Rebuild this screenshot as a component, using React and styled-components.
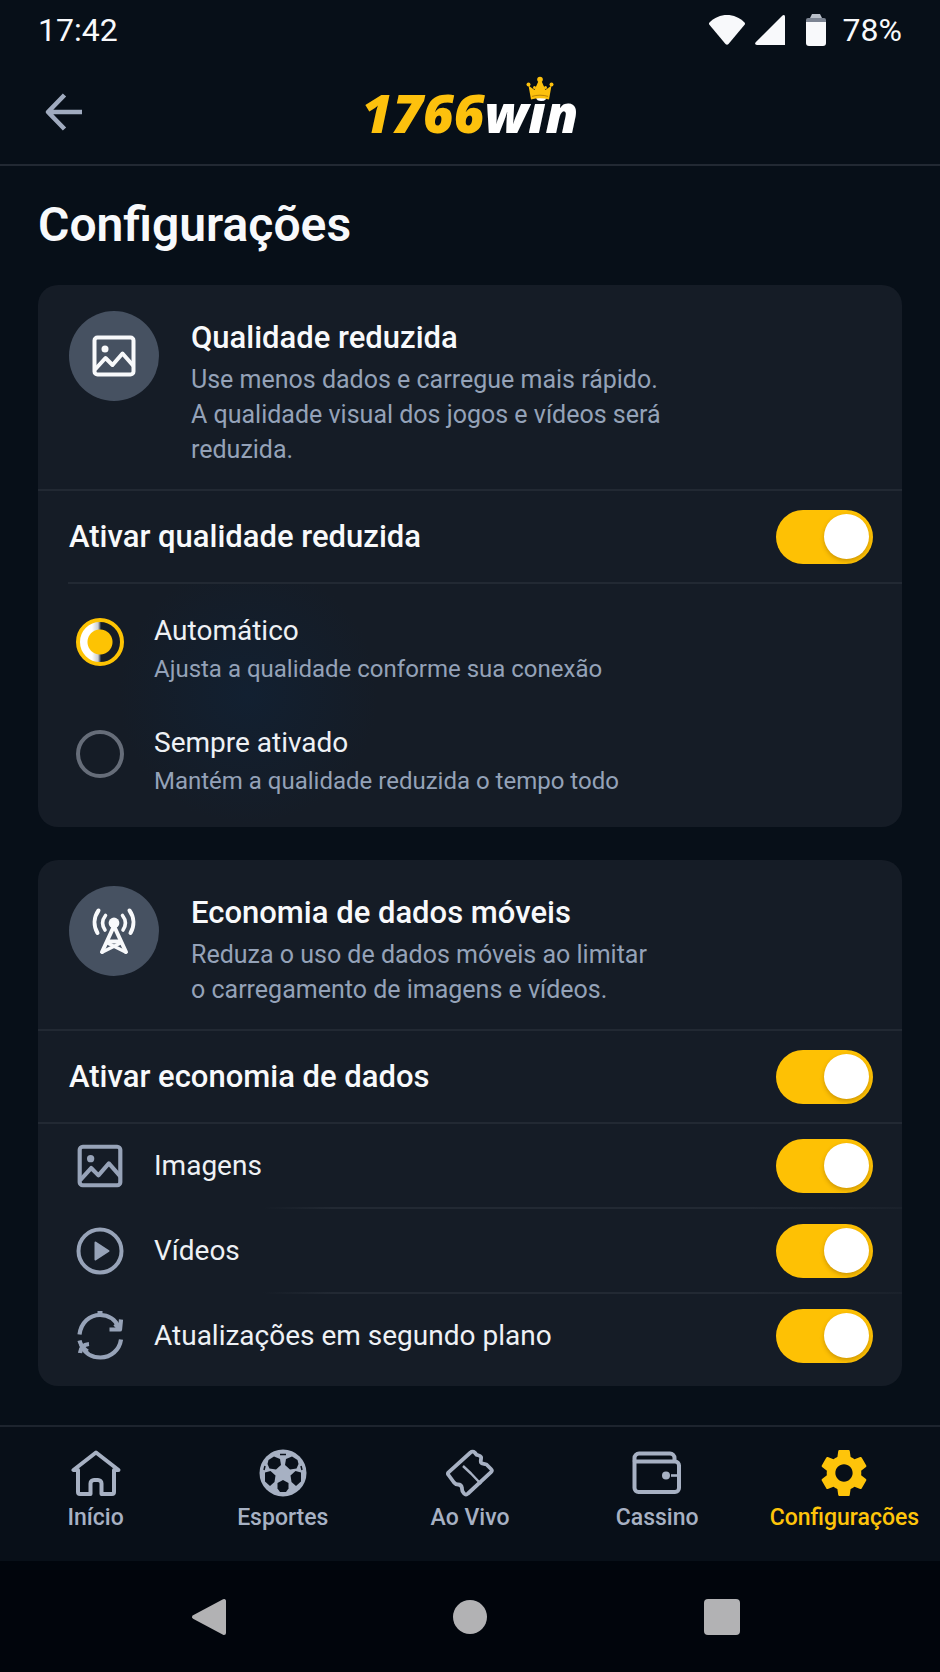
import { useState } from 'react';
import styled, { createGlobalStyle } from 'styled-components';
import { MdSettings } from 'react-icons/md';

const App = () => {
  const [reduced, setReduced] = useState(true);
  const [mode, setMode] = useState('auto');
  const [saver, setSaver] = useState({
    all: true,
    images: true,
    videos: true,
    background: true,
  });

  const toggleSaver = (key) => setSaver({ ...saver, [key]: !saver[key] });

  return (
    <Page>
      <GlobalStyle />
      <StatusBar>
        <span>17:42</span>
        <StatusIcons>
          <WifiIcon />
          <SignalIcon />
          <BatteryIcon />
          <span>78%</span>
        </StatusIcons>
      </StatusBar>
      <Header>
        <BackButton type="button" aria-label="Voltar">
          <ArrowIcon />
        </BackButton>
        <Logo href="#inicio">
          1766<LogoWin>win</LogoWin>
          <CrownIcon />
        </Logo>
      </Header>
      <Main>
        <PageTitle>Configurações</PageTitle>
        <Card>
          <CardHead>
            <Badge>
              <ImageIcon size={48} />
            </Badge>
            <HeadText>
              <CardTitle>Qualidade reduzida</CardTitle>
              <Description>
                Use menos dados e carregue mais rápido.
                <br />A qualidade visual dos jogos e vídeos será
                <br />
                reduzida.
              </Description>
            </HeadText>
          </CardHead>
          <Divider />
          <SwitchRow>
            <RowTitle>Ativar qualidade reduzida</RowTitle>
            <Switch
              type="checkbox"
              role="switch"
              checked={reduced}
              onChange={() => setReduced(!reduced)}
            />
          </SwitchRow>
          <Divider $inset />
          <OptionList>
            <Option>
              <Radio
                type="radio"
                name="mode"
                checked={mode === 'auto'}
                onChange={() => setMode('auto')}
              />
              <span>
                <OptionTitle>Automático</OptionTitle>
                <OptionHint>Ajusta a qualidade conforme sua conexão</OptionHint>
              </span>
            </Option>
            <Option>
              <Radio
                type="radio"
                name="mode"
                checked={mode === 'always'}
                onChange={() => setMode('always')}
              />
              <span>
                <OptionTitle>Sempre ativado</OptionTitle>
                <OptionHint>Mantém a qualidade reduzida o tempo todo</OptionHint>
              </span>
            </Option>
          </OptionList>
        </Card>
        <Card $list>
          <CardHead>
            <Badge>
              <TowerIcon />
            </Badge>
            <HeadText>
              <CardTitle>Economia de dados móveis</CardTitle>
              <Description>
                Reduza o uso de dados móveis ao limitar
                <br />o carregamento de imagens e vídeos.
              </Description>
            </HeadText>
          </CardHead>
          <Divider />
          <SwitchRow>
            <RowTitle>Ativar economia de dados</RowTitle>
            <Switch
              type="checkbox"
              role="switch"
              checked={saver.all}
              onChange={() => toggleSaver('all')}
            />
          </SwitchRow>
          <Divider />
          <SwitchRow $sub>
            <ImageIcon size={50} />
            <RowLabel>Imagens</RowLabel>
            <Switch
              type="checkbox"
              role="switch"
              checked={saver.images}
              onChange={() => toggleSaver('images')}
            />
          </SwitchRow>
          <Divider $fade />
          <SwitchRow $sub>
            <PlayIcon />
            <RowLabel>Vídeos</RowLabel>
            <Switch
              type="checkbox"
              role="switch"
              checked={saver.videos}
              onChange={() => toggleSaver('videos')}
            />
          </SwitchRow>
          <Divider $fade />
          <SwitchRow $sub>
            <RefreshIcon />
            <RowLabel>Atualizações em segundo plano</RowLabel>
            <Switch
              type="checkbox"
              role="switch"
              checked={saver.background}
              onChange={() => toggleSaver('background')}
            />
          </SwitchRow>
        </Card>
      </Main>
      <TabBar>
        <Tab href="#inicio">
          <HomeIcon />
          Início
        </Tab>
        <Tab href="#esportes">
          <BallIcon />
          Esportes
        </Tab>
        <Tab href="#ao-vivo">
          <TicketIcon />
          Ao Vivo
        </Tab>
        <Tab href="#cassino">
          <WalletIcon />
          Cassino
        </Tab>
        <Tab href="#configuracoes" $active aria-current="page">
          <MdSettings size={48} viewBox="2 2 20 20" />
          Configurações
        </Tab>
      </TabBar>
      <SystemBar>
        <SystemButton type="button" aria-label="Voltar">
          <svg width="56" height="40" viewBox="0 0 56 40">
            <path
              d="M10 20 40 4v32Z"
              fill="currentColor"
              stroke="currentColor"
              strokeWidth="4"
              strokeLinejoin="round"
            />
          </svg>
        </SystemButton>
        <SystemButton type="button" aria-label="Tela inicial">
          <svg width="56" height="40" viewBox="0 0 56 40">
            <circle cx="28" cy="20" r="17" fill="currentColor" />
          </svg>
        </SystemButton>
        <SystemButton type="button" aria-label="Recentes">
          <svg width="56" height="40" viewBox="0 0 56 40">
            <rect x="4" y="2" width="36" height="36" rx="4" fill="currentColor" />
          </svg>
        </SystemButton>
      </SystemBar>
    </Page>
  );
};

const WifiIcon = () => (
  <svg width="38" height="32" viewBox="0 0 38 32" fill="currentColor">
    <path d="M1.5 8.5C11-1.5 27-1.5 36.5 8.5c.7.8.7 1.5.1 2.3L20.5 30c-.9 1-2.1 1-3 0L1.4 10.8c-.6-.8-.6-1.5.1-2.3Z" />
  </svg>
);

const SignalIcon = () => (
  <svg width="32" height="32" viewBox="0 0 32 32" fill="currentColor">
    <path d="M28.5 1.5c1-1 2.5-.5 2.5 1V31H3c-1.8 0-2.5-1.5-1.3-2.7Z" />
  </svg>
);

const BatteryIcon = () => (
  <svg width="20" height="32" viewBox="0 0 20 32">
    <path d="M6 0h8l2 4H4Z" fill="#b9bfc9" />
    <path d="M2 4h16a2 2 0 0 1 2 2v2H0V6a2 2 0 0 1 2-2Z" fill="#7c8492" />
    <path d="M0 8h20v21a3 3 0 0 1-3 3H3a3 3 0 0 1-3-3Z" fill="currentColor" />
  </svg>
);

const ArrowIcon = () => (
  <svg width="40" height="40" viewBox="0 0 40 40" fill="none">
    <path
      d="M20.5 3 4 20l16.5 17M4.5 20H38"
      stroke="currentColor"
      strokeWidth="4.6"
      strokeLinejoin="round"
    />
  </svg>
);

const CrownIcon = () => (
  <Crown viewBox="0 0 28 24" fill="#fdc10d" aria-hidden="true">
    <path d="M5 23.5 2.5 9.5 8.5 14l4-9h3l4 9 6-4.5L23 23.5c-6-1.7-12-1.7-18 0Z" />
    <circle cx="14" cy="3.5" r="2.8" />
    <circle cx="2.5" cy="8.5" r="2" />
    <circle cx="25.5" cy="8.5" r="2" />
    <circle cx="8.5" cy="11.5" r="1.5" />
    <circle cx="19.5" cy="11.5" r="1.5" />
    <path d="M6 20.4c5-1.6 11-1.6 16 0" fill="none" stroke="#b98205" />
  </Crown>
);

const ImageIcon = ({ size }) => (
  <svg width={size} height={size} viewBox="0 0 48 48" fill="none" aria-hidden="true">
    <g stroke="currentColor" strokeWidth="4" strokeLinejoin="round">
      <rect x="4.5" y="5.5" width="39" height="37" rx="3" />
      <path d="m5 37.5 10.5-11.5 7 7 10-11.5 11 12.5" />
    </g>
    <circle cx="15" cy="17" r="3.5" fill="currentColor" />
  </svg>
);

const TowerIcon = () => (
  <svg width="48" height="48" viewBox="0 0 48 48" fill="none" aria-hidden="true">
    <g stroke="currentColor" strokeWidth="4" strokeLinecap="round" strokeLinejoin="round">
      <path d="M12 45 24 19l12 26" />
      <path d="M18.5 34.5h11" />
      <path d="m17.5 36 18 9M30.5 36l-18 9" strokeWidth="3.4" />
      <path
        d="M15.5 8.5c-3.5 4.5-3.5 10-.5 14.5M32.5 8.5c3.5 4.5 3.5 10 .5 14.5"
        strokeWidth="3.6"
      />
      <path d="M8.5 3.5c-5 7-5 15.5-1 22.5M39.5 3.5c5 7 5 15.5 1 22.5" />
    </g>
    <circle cx="24" cy="16" r="5.4" fill="currentColor" />
  </svg>
);

const PlayIcon = () => (
  <svg width="50" height="50" viewBox="0 0 50 50" fill="none" aria-hidden="true">
    <circle cx="25" cy="25" r="21.5" stroke="currentColor" strokeWidth="4" />
    <path
      d="M20.5 16.5 33.5 25l-13 8.5Z"
      fill="currentColor"
      stroke="currentColor"
      strokeWidth="2"
      strokeLinejoin="round"
    />
  </svg>
);

const RefreshIcon = () => (
  <svg width="50" height="50" viewBox="0 0 50 50" fill="none" aria-hidden="true">
    <g stroke="currentColor" strokeWidth="4.2" strokeLinejoin="round">
      <path d="M4.5 23.5C6 11.5 14.5 4 25 4c9 0 15.5 5 19 12.5" />
      <path d="M46 8.5 45 18.5H34.5" />
      <path d="m40 13 5 5.5" />
      <path d="M22.5 2h5" />
      <path d="M46 28.5C44.5 39 36 46.5 25.5 46.5 16 46.5 9.5 42 6 33.5" />
      <path d="M4.5 29.5c1 4 4 8 8 11M5 42c.5-5 3.5-8.5 9-9" />
    </g>
  </svg>
);

const HomeIcon = () => (
  <svg width="50" height="48" viewBox="-1 0 50 48" fill="none" aria-hidden="true">
    <path
      d="M1.5 21H6v22a2 2 0 0 0 2 2h10.5V34.5a3.5 3.5 0 0 1 3.5-3.5h4a3.5 3.5 0 0 1 3.5 3.5V45H40a2 2 0 0 0 2-2V21h4.5L24 3.5Z"
      stroke="currentColor"
      strokeWidth="4"
      strokeLinejoin="round"
    />
  </svg>
);

const BallIcon = () => (
  <svg width="48" height="48" viewBox="0 0 48 48" aria-hidden="true">
    <circle cx="24" cy="24" r="23.5" fill="currentColor" />
    <g fill="#0a111b">
      <path d="m9.5 11 5.5-3.5 6 2.5 1 6-5 4.5-6.5-1L8.5 15Z" />
      <path d="M38.5 11 33 7.5 27 10l-1 6 5 4.5 6.5-1L39.5 15Z" />
      <path d="m6 23.5 5.5-1.5 5 4.5-1 6.5-4.5 4L6 32.5Z" />
      <path d="m42 23.5-5.5-1.5-5 4.5 1 6.5 4.5 4L42 32.5Z" />
      <path d="m18.5 34 5.5-3 5.5 3v5.500L27 43h-6l-2.500-3.500Z" />
    </g>
    <path d="M21 5.5h6M5 21l1-4M43 21l-1-4" stroke="#0a111b" strokeWidth="1.5" />
  </svg>
);

const TicketIcon = () => (
  <svg width="48" height="48" viewBox="0 0 48 48" fill="none" aria-hidden="true">
    <g stroke="currentColor" strokeLinejoin="round">
      <path
        d="M2.500 26c-.8-.9-.8-1.8 0-2.700L24.500 3.500c1.200-1.200 3-1.200 4.200 0l1.800 2.200c1.500.8 3.500.6 4.500 2.300.6 1.400-.8 3.600 0 5.500 1 1.800 3.800.8 5.500 2l4.500 4.500c1 1 1 2.200 0 3.200L22 44.500c-1.200 1.200-2.800 1.200-4 0-1.500-1.500-2.300-3-2-5.500-.5-2.500-1.500-3.500-4-3.500-1.800 0-2.800-.5-4-2Z"
        strokeWidth="3.8"
      />
      <path d="m17 17 8 7.5 10 10.5" strokeWidth="2.4" />
    </g>
  </svg>
);

const WalletIcon = () => (
  <svg width="50" height="48" viewBox="0 0 50 48" fill="none" aria-hidden="true">
    <g stroke="currentColor" strokeWidth="4" strokeLinejoin="round">
      <path d="M2.5 12.5V9A4.5 4.5 0 0 1 7 4.500h31A4.5 4.5 0 0 1 42.5 9v3.5" />
      <path d="M2.5 12.5H43a4 4 0 0 1 4 4V39a4 4 0 0 1-4 4H6.5a4 4 0 0 1-4-4Z" />
      <path d="M39 26.5h7" strokeWidth="2.6" />
    </g>
    <circle cx="34" cy="26.5" r="4" fill="currentColor" />
  </svg>
);

const GlobalStyle = createGlobalStyle`
  * {
    box-sizing: border-box;
  }
  body {
    margin: 0;
    background: #070f18;
    color: #f8f9fb;
    font-family: Roboto, 'Liberation Sans', sans-serif;
  }
  svg {
    display: block;
    flex: none;
  }
`;

const Page = styled.div`
  display: flex;
  flex-direction: column;
  min-height: 100vh;
`;

const StatusBar = styled.div`
  display: flex;
  justify-content: space-between;
  align-items: center;
  height: 60px;
  padding: 0 38px;
  font-size: 32px;
`;

const StatusIcons = styled.div`
  display: flex;
  align-items: center;
  gap: 8px;
  svg:nth-child(3) {
    margin: 0 9px 0 12px;
  }
`;

const Header = styled.header`
  display: grid;
  grid-template-columns: 1fr auto 1fr;
  align-items: center;
  height: 106px;
  padding: 0 44px;
  border-bottom: 2px solid #222933;
`;

const BackButton = styled.button`
  justify-self: start;
  padding: 0;
  border: 0;
  background: none;
  color: #a0abbf;
  cursor: pointer;
`;

const Logo = styled.a`
  position: relative;
  padding-top: 2px;
  color: #fdc10d;
  font-family: 'Open Sans', 'Noto Sans', sans-serif;
  font-size: 53px;
  font-style: italic;
  font-weight: 800;
  line-height: 60px;
  text-decoration: none;
`;

const LogoWin = styled.span`
  color: #fff;
`;

const Crown = styled.svg`
  position: absolute;
  top: -5px;
  right: 24px;
  width: 28px;
  height: 24px;
`;

const Main = styled.main`
  flex: 1;
  padding: 31px 38px 39px;
`;

const PageTitle = styled.h1`
  margin: 0 0 32px;
  font-size: 48px;
  font-weight: 600;
  line-height: 56px;
`;

const Card = styled.section`
  padding-bottom: ${({ $list }) => ($list ? '9px' : '0')};
  border-radius: 20px;
  background: #151c26;
  & + & {
    margin-top: 33px;
  }
`;

const CardHead = styled.div`
  display: flex;
  gap: 32px;
  padding: 26px 31px 22px;
`;

const Badge = styled.div`
  display: flex;
  flex: none;
  justify-content: center;
  align-items: center;
  width: 90px;
  height: 90px;
  border-radius: 50%;
  background: #465161;
`;

const HeadText = styled.div`
  padding-top: 7px;
`;

const CardTitle = styled.h2`
  margin: 0 0 4px;
  font-size: 31px;
  font-weight: 500;
  line-height: 40px;
`;

const Description = styled.p`
  margin: 0;
  color: #94a2b8;
  font-size: 25px;
  line-height: 35px;
`;

const Divider = styled.div`
  height: 2px;
  margin-left: ${({ $inset }) => ($inset ? '30px' : '0')};
  background: ${({ $fade }) =>
    $fade
      ? 'linear-gradient(90deg, transparent 26%, #222933 34%, #222933 82%, #1a212b)'
      : '#222933'};
`;

const SwitchRow = styled.label`
  display: flex;
  align-items: center;
  gap: 29px;
  height: ${({ $sub }) => ($sub ? '83px' : '91px')};
  padding: 0 29px 0 ${({ $sub }) => ($sub ? '37px' : '31px')};
  color: #97a3b8;
  cursor: pointer;
`;

const RowTitle = styled.span`
  flex: 1;
  color: #f8f9fb;
  font-size: 31px;
  font-weight: 500;
`;

const RowLabel = styled.span`
  flex: 1;
  color: #eef1f5;
  font-size: 28px;
`;

const Switch = styled.input`
  appearance: none;
  display: flex;
  align-items: center;
  width: 97px;
  height: 54px;
  margin: 0;
  padding: 0 4px;
  border-radius: 27px;
  background: #465161;
  cursor: pointer;
  &::before {
    content: '';
    width: 45px;
    height: 45px;
    border-radius: 50%;
    background: #fff;
    box-shadow: 0 2px 4px rgba(90, 50, 0, 0.3);
  }
  &:checked {
    justify-content: flex-end;
    background: #fec104;
  }
`;

const OptionList = styled.div`
  display: flex;
  flex-direction: column;
  gap: 36px;
  padding: 28px 30px 27px 38px;
  background: radial-gradient(circle at 210px 110px, #122031, transparent 130px);
`;

const Option = styled.label`
  display: flex;
  align-items: flex-start;
  gap: 30px;
  cursor: pointer;
`;

const Radio = styled.input`
  appearance: none;
  flex: none;
  width: 48px;
  height: 48px;
  margin: 6px 0 0;
  border: 4px solid #666d79;
  border-radius: 50%;
  cursor: pointer;
  &:checked {
    border-color: #fdc303;
    background:
      radial-gradient(circle, #fdc303 12px, transparent 13px),
      linear-gradient(90deg, #fff 12px, #c9ccd2 18px, #5a606b 20px, #151c26 21px);
  }
`;

const OptionTitle = styled.span`
  display: block;
  color: #eef1f5;
  font-size: 28px;
  line-height: 38px;
`;

const OptionHint = styled.span`
  display: block;
  color: #94a2b8;
  font-size: 24px;
  line-height: 38px;
`;

const TabBar = styled.nav`
  display: grid;
  grid-template-columns: repeat(5, 1fr);
  padding: 22px 2px 30px;
  border-top: 2px solid #1d242e;
  background: #080f18;
`;

const Tab = styled.a`
  display: flex;
  flex-direction: column;
  align-items: center;
  gap: 8px;
  color: ${({ $active }) => ($active ? '#fec40a' : '#a7b1c3')};
  font-size: 23px;
  font-weight: 500;
  line-height: 26px;
  text-decoration: none;
`;

const SystemBar = styled.div`
  display: flex;
  justify-content: space-between;
  align-items: center;
  height: 112px;
  padding: 0 184px;
  background: #01050c;
`;

const SystemButton = styled.button`
  padding: 0;
  border: 0;
  background: none;
  color: #b2b2b4;
  cursor: pointer;
`;

export default App;
